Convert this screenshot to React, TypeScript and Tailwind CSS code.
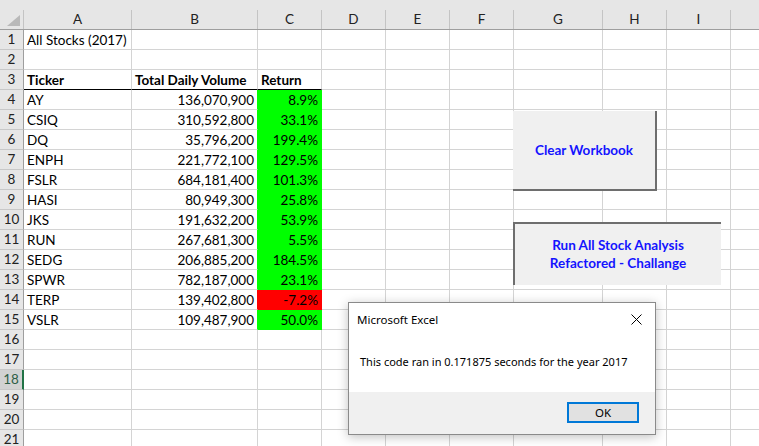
import React from 'react';

// J is only partly on screen, so its letter is out of view and left blank
const COLS = [
  { key: 'A', label: 'A', w: 'w-[108px]' },
  { key: 'B', label: 'B', w: 'w-[126px]' },
  { key: 'C', label: 'C', w: 'w-[64px]' },
  { key: 'D', label: 'D', w: 'w-[64px]' },
  { key: 'E', label: 'E', w: 'w-[64px]' },
  { key: 'F', label: 'F', w: 'w-[64px]' },
  { key: 'G', label: 'G', w: 'w-[89px]' },
  { key: 'H', label: 'H', w: 'w-[64px]' },
  { key: 'I', label: 'I', w: 'w-[64px]' },
  { key: 'J', label: '', w: 'w-[64px]' },
];

const STOCKS = [
  ['AY', '136,070,900', '8.9%'],
  ['CSIQ', '310,592,800', '33.1%'],
  ['DQ', '35,796,200', '199.4%'],
  ['ENPH', '221,772,100', '129.5%'],
  ['FSLR', '684,181,400', '101.3%'],
  ['HASI', '80,949,300', '25.8%'],
  ['JKS', '191,632,200', '53.9%'],
  ['RUN', '267,681,300', '5.5%'],
  ['SEDG', '206,885,200', '184.5%'],
  ['SPWR', '782,187,000', '23.1%'],
  ['TERP', '139,402,800', '-7.2%'],
  ['VSLR', '109,487,900', '50.0%'],
];

type Cell = { text?: string; bold?: boolean; right?: boolean; fill?: string; borderB?: string; borderR?: string };

function cellFor(row: number, col: string): Cell {
  if (row === 1 && col === 'A') return { text: 'All Stocks (2017)' };
  if (row === 3) {
    if (col === 'A') return { text: 'Ticker', bold: true, borderB: 'border-b-black' };
    if (col === 'B') return { text: 'Total Daily Volume', bold: true, borderB: 'border-b-black' };
    if (col === 'C') return { text: 'Return', bold: true, borderB: 'border-b-black' };
  }
  if (row >= 4 && row <= 15) {
    const s = STOCKS[row - 4];
    const neg = s[2].startsWith('-');
    if (col === 'A') return { text: s[0] };
    if (col === 'B') return { text: s[1], right: true, borderR: neg ? 'border-r-[#ff0000]' : 'border-r-[#00ff00]' };
    if (col === 'C')
      return neg
        ? { text: s[2], right: true, fill: 'bg-[#ff0000]', borderB: 'border-b-[#ff0000]', borderR: 'border-r-[#ff0000]' }
        : { text: s[2], right: true, fill: 'bg-[#00ff00]', borderB: 'border-b-[#00ff00]', borderR: 'border-r-[#00ff00]' };
  }
  return {};
}

function HeaderRow() {
  return (
    <div className="flex h-[30px] bg-[#e6e6e6] border-b border-[#9e9e9e]">
      <div className="w-[24px] shrink-0 flex flex-col">
        <div className="h-[10px]" />
        <div className="flex-1 border-r border-[#c4c4c4] flex items-end justify-end pr-[3px] pb-[3px]">
          <svg width="13" height="11" viewBox="0 0 13 11">
            <polygon points="13,0 13,11 0,11" fill="#b9b9b9" />
          </svg>
        </div>
      </div>
      {COLS.map((c) => (
        <div key={c.key} className={`${c.w} shrink-0 flex flex-col`}>
          <div className="h-[10px]" />
          <div className="flex-1 border-r border-[#c4c4c4] flex items-center justify-center text-[13.5px] text-[#222] leading-none pt-[1px]">
            {c.label}
          </div>
        </div>
      ))}
    </div>
  );
}

function Row({ n }: { n: number }) {
  const selected = n === 18;
  return (
    <div className="flex h-[20px]">
      <div
        className={`w-[24px] shrink-0 flex items-center justify-center text-[13.5px] leading-none pt-[1px] border-b border-[#c8c8c8] ${
          selected ? 'bg-[#d2d2d2] text-[#2f5f47] border-r-2 border-r-[#217346]' : 'bg-[#e6e6e6] text-[#222] border-r border-r-[#9e9e9e]'
        }`}
      >
        {n}
      </div>
      {COLS.map((c) => {
        const cell = cellFor(n, c.key);
        return (
          <div
            key={c.key}
            className={`${c.w} shrink-0 border-r border-b border-[#d4d4d4] ${cell.borderB ?? ''} ${cell.borderR ?? ''} ${cell.fill ?? ''} flex items-center px-[3px] pt-[2px] text-[13.5px] leading-none text-black whitespace-nowrap overflow-visible ${
              cell.right ? 'justify-end' : 'justify-start'
            } ${cell.bold ? 'font-bold' : ''}`}
          >
            {cell.text}
          </div>
        );
      })}
    </div>
  );
}

export default function App() {
  const rows = Array.from({ length: 21 }, (_, i) => i + 1);
  return (
    <div className="relative w-[759px] h-[446px] overflow-hidden bg-white font-['Lato','Liberation_Sans',sans-serif]">
      <div className="w-[900px]">
        <HeaderRow />
        {rows.map((n) => (
          <Row key={n} n={n} />
        ))}
      </div>

      <div className="absolute left-[513px] top-[111px] w-[144px] h-[80px] bg-[#f0f0f0] border-r-2 border-b-2 border-[#6e6e6e] flex items-center justify-center text-[13.5px] font-bold text-[#1414ff]">
        Clear Workbook
      </div>

      <div className="absolute left-[513px] top-[222px] w-[208px] h-[63px] bg-[#f0f0f0] border-t-2 border-l-2 border-[#6e6e6e] flex flex-col items-center justify-center text-[13.5px] leading-[18px] font-bold text-[#1414ff] pb-[2px]">
        <span>Run All Stock Analysis</span>
        <span>Refactored - Challange</span>
      </div>

      <div className="absolute left-[348px] top-[302px] w-[308px] h-[133px] bg-white border border-[#8a8a8a] shadow-[0_2px_10px_rgba(0,0,0,0.25)] flex flex-col font-['Noto_Sans','Open_Sans',sans-serif] text-black">
        <div className="h-[32px] flex items-center justify-between pl-[8px] pr-[10px] pt-[1px]">
          <span className="text-[11.5px]">Microsoft Excel</span>
          <svg width="11" height="11" viewBox="0 0 11 11" className="mr-[3px]">
            <path d="M0.5 0.5L10.5 10.5M10.5 0.5L0.5 10.5" stroke="#000" strokeWidth="1" />
          </svg>
        </div>
        <div className="h-[57px] flex items-center pl-[11px] pb-[2px] text-[11px]">
          This code ran in 0.171875 seconds for the year 2017
        </div>
        <div className="flex-1 bg-[#f0f0f0] flex items-start justify-end pr-[16px] pt-[10px]">
          <div className="w-[72px] h-[21px] border-2 border-[#0078d7] bg-[#e1e1e1] flex items-center justify-center text-[11.5px] leading-none">
            OK
          </div>
        </div>
      </div>
    </div>
  );
}
